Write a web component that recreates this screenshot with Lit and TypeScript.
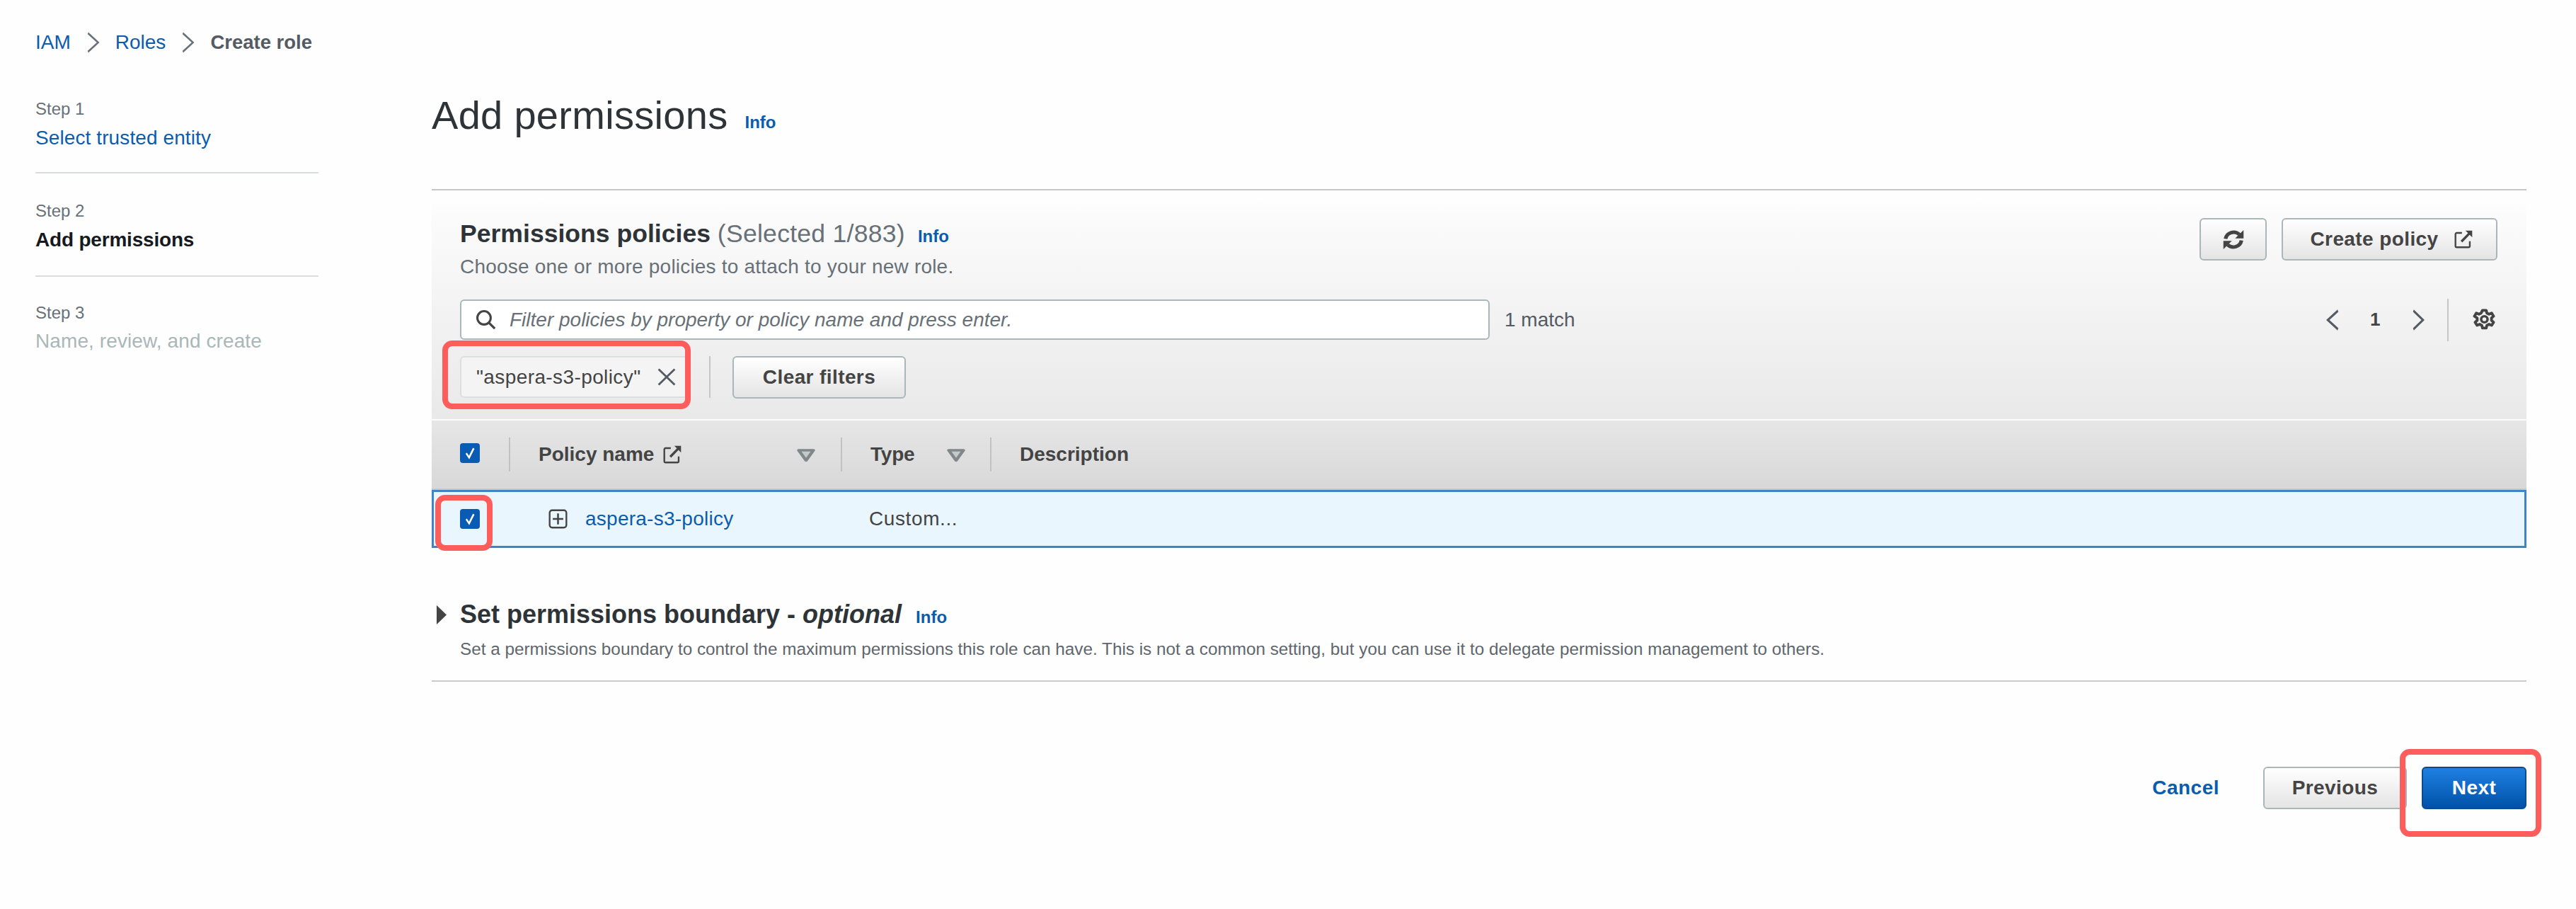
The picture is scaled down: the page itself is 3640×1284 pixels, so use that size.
import { LitElement, css, html, svg } from 'lit';
import { customElement } from 'lit/decorators.js';

const icon = (cls: string, body: unknown, box = '0 0 16 16') =>
  html`<svg class=${cls} viewBox=${box} fill="none" preserveAspectRatio="none">${body}</svg>`;

const external = (cls: string) =>
  icon(cls, svg`
    <path d="M7 2.4H2.6a1 1 0 0 0-1 1v10a1 1 0 0 0 1 1h10a1 1 0 0 0 1-1V9.4" stroke="currentColor" stroke-width="1.4"/>
    <path d="M6.6 9.6 14 2" stroke="currentColor" stroke-width="2"/>
    <path d="M15.6 .4v5.6L10 .4z" fill="currentColor"/>`);

const sortCaret = (cls: string) =>
  icon(cls, svg`<path d="M2 3h12L8 14z" fill="#c6c9ca" stroke="#80888b" stroke-width="2.6" stroke-linejoin="round"/>`);

const tick = () =>
  html`<span class="check">${icon('tick', svg`<path d="M3.4 8.2 7 13 12.8 2.6" stroke="#fff" stroke-width="2.2"/>`)}</span>`;

@customElement('app-root')
export class AppRoot extends LitElement {
  static styles = css`
    :host {
      display: block;
      position: relative;
      width: 3640px;
      height: 1284px;
      overflow: hidden;
      background: #fefefe;
      color: #444b53;
      font-family: 'Liberation Sans', Arial, sans-serif;
      font-size: 28px;
    }
    svg { display: block; flex: none; }
    a { color: #0b5cad; text-decoration: none; }

    .crumbs {
      display: flex;
      align-items: center;
      height: 120px;
      padding-left: 50px;
    }
    .crumbs .here { color: #545b64; font-weight: 700; font-size: 27.5px; }
    .crumb-sep { width: 19px; height: 30px; margin: 0 22px; color: #687078; }

    .layout { display: flex; }
    .side { width: 400px; margin-left: 50px; }
    .main { width: 2960px; margin-left: 160px; }

    .step { padding-top: 37px; height: 107px; border-top: 2px solid #d9dcdd; }
    .step:first-child { padding-top: 18px; height: 105px; border-top: none; }
    .step:last-child { padding-top: 35px; }
    .step-num { font-size: 24px; line-height: 32px; color: #687078; }
    .step-name { line-height: 40px; margin-top: 5px; letter-spacing: .1px; }
    .step-name.active { font-weight: 700; color: #16191f; letter-spacing: -.2px; }
    .step-name.off { color: #aab7b8; margin-top: 4px; }

    .title-row {
      display: flex;
      height: 147px;
      border-bottom: 2px solid #c4c7c8;
    }
    h1 {
      margin: 0;
      font-size: 56px;
      font-weight: 400;
      line-height: 86px;
      color: #2e3338;
      letter-spacing: .3px;
    }
    .info { font-size: 24px; font-weight: 700; color: #0b5cad; }
    h1 + .info { margin: 36px 0 0 24px; line-height: 34px; }

    .panel {
      box-sizing: border-box;
      height: 323px;
      padding: 39px 41px 0 40px;
      background: linear-gradient(#fff 0, #fbfbfb 40px, #e9e9e9 100%);
    }
    .panel-head { display: flex; justify-content: space-between; height: 115px; }
    h2 { margin: 0; font-size: 35.6px; line-height: 44px; font-weight: 700; color: #2e3338; }
    h2 .count { font-weight: 400; color: #687078; letter-spacing: .25px; }
    h2 .info { margin-left: 18px; }
    .sub { margin-top: 5px; line-height: 32px; color: #687078; letter-spacing: .2px; }
    .actions { display: flex; gap: 21px; }

    .btn {
      box-sizing: border-box;
      display: flex;
      align-items: center;
      justify-content: center;
      height: 60px;
      border: 2px solid #aab7b8;
      border-radius: 6px;
      background: linear-gradient(#fff, #e4e4e4);
      font-weight: 700;
      color: #444;
      letter-spacing: .4px;
    }
    .btn-refresh { width: 95px; }
    .ic-refresh { width: 30px; height: 29px; }
    .btn-create { width: 305px; gap: 21px; padding-left: 5px; }
    .ic-ext { width: 27px; height: 27px; color: #444; }
    .btn-clear { width: 245px; }

    .search-row { display: flex; align-items: center; height: 57px; }
    .search {
      box-sizing: border-box;
      display: flex;
      align-items: center;
      gap: 19px;
      width: 1455px;
      height: 57px;
      padding-left: 20px;
      background: #fff;
      border: 2px solid #aab7b8;
      border-radius: 6px;
      font-style: italic;
      color: #687078;
    }
    .ic-search { width: 29px; height: 29px; color: #444; }
    .match { margin-left: 21px; color: #545b64; }
    .pager { display: flex; align-items: center; margin-left: auto; margin-right: 2px; height: 60px; }
    .ic-chev { width: 19px; height: 30px; color: #545b64; }
    .ic-chev.next { width: 18px; }
    .page-no { width: 12px; margin: 0 47px 0 43px; font-weight: 700; font-size: 26px; color: #444; }
    .pager-sep { width: 2px; height: 60px; margin: 0 34px 0 32px; background: #c4c7c8; }
    .ic-gear { width: 33px; height: 32px; color: #444; }

    .filter-row { display: flex; align-items: center; height: 59px; margin-top: 23px; }
    .chip {
      box-sizing: border-box;
      display: flex;
      align-items: center;
      width: 318px;
      height: 59px;
      padding-left: 21px;
      background: #f4f4f4;
      border: 2px solid #dcdfe0;
      border-right: none;
      border-radius: 6px 0 0 6px;
      color: #444;
      letter-spacing: .4px;
    }
    .ic-x { width: 28px; height: 27px; margin-left: 22px; color: #545b64; }
    .filter-sep { width: 2px; height: 59px; margin: 0 31px 0 34px; background: #c4c7c8; }

    .thead {
      display: flex;
      align-items: center;
      box-sizing: border-box;
      height: 100px;
      border-top: 2px solid #fdfdfd;
      border-bottom: 2px solid #c6c9ca;
      background: linear-gradient(#e6e6e6, #d8d8d8);
      font-weight: 700;
      color: #444;
    }
    .cell { display: flex; align-items: center; height: 48px; box-sizing: border-box; }
    .thead .cell + .cell { border-left: 2px solid #bfc3c4; }
    .thead .check { margin-bottom: 4px; }
    .c-check { width: 109px; padding-left: 40px; }
    .c-name { width: 469px; padding-left: 40px; }
    .c-type { width: 211px; padding-left: 40px; letter-spacing: -.2px; }
    .c-desc { padding-left: 40px; }
    .ic-ext.small { margin-left: 12px; }
    .ic-caret { width: 28px; height: 21px; margin-left: auto; }
    .c-name .ic-caret { margin-right: 35px; }
    .c-type .ic-caret { margin-right: 34px; }

    .check {
      display: flex;
      align-items: center;
      justify-content: center;
      width: 28px;
      height: 28px;
      border-radius: 4px;
      background: #0a5bb4;
    }
    .tick { width: 18px; height: 20px; }

    .tbody-row {
      display: flex;
      align-items: center;
      box-sizing: border-box;
      height: 82px;
      border: 3px solid #3f84c8;
      background: #eaf6fe;
    }
    .tbody-row .c-check { width: 106px; padding-left: 37px; }
    .tbody-row .c-name { padding-left: 56px; gap: 25px; letter-spacing: .25px; }
    .tbody-row .c-type { padding-left: 40px; color: #444; letter-spacing: .6px; }
    .ic-plus { width: 27px; height: 28px; color: #444; }

    .boundary {
      height: 119px;
      padding-top: 68px;
      border-bottom: 2px solid #c9cccd;
    }
    .boundary h2 { display: flex; align-items: center; font-size: 36px; white-space: pre; }
    .boundary h2 .info { margin: 8px 0 0 20px; }
    .ic-tri { width: 16px; height: 27px; margin: 0 18px 0 6px; color: #444; }
    .boundary p { margin: 7px 0 0 40px; font-size: 24.3px; line-height: 32px; color: #5f666d; }

    .footer { display: flex; align-items: center; justify-content: flex-end; margin-top: 120px; }
    .cancel { font-weight: 700; margin-right: 62px; letter-spacing: .5px; }
    .btn-prev { width: 203px; }
    .btn-next {
      width: 148px;
      margin-left: 21px;
      background: linear-gradient(#1f80e2, #0052a8);
      border-color: #0b4a8c;
      color: #fff;
    }

    .mark {
      position: absolute;
      box-sizing: border-box;
      border: 8px solid #ff5c5c;
      border-radius: 14px;
    }
    .mark-chip { left: 625px; top: 481px; width: 351px; height: 97px; }
    .mark-check { left: 615px; top: 699px; width: 81px; height: 79px; }
    .mark-next { left: 3391px; top: 1058px; width: 200px; height: 124px; }
  `;

  render() {
    return html`
      <nav class="crumbs">
        <a href="#">IAM</a>
        ${icon('crumb-sep', svg`<path d="M2 1l12 7-12 7" stroke="currentColor" stroke-width="1.6"/>`)}
        <a href="#">Roles</a>
        ${icon('crumb-sep', svg`<path d="M2 1l12 7-12 7" stroke="currentColor" stroke-width="1.6"/>`)}
        <span class="here">Create role</span>
      </nav>
      <div class="layout">
        <aside class="side">
          <div class="step">
            <div class="step-num">Step 1</div>
            <div class="step-name"><a href="#">Select trusted entity</a></div>
          </div>
          <div class="step">
            <div class="step-num">Step 2</div>
            <div class="step-name active">Add permissions</div>
          </div>
          <div class="step">
            <div class="step-num">Step 3</div>
            <div class="step-name off">Name, review, and create</div>
          </div>
        </aside>
        <main class="main">
          <div class="title-row">
            <h1>Add permissions</h1>
            <a class="info" href="#">Info</a>
          </div>
          <section class="panel">
            <div class="panel-head">
              <div>
                <h2>Permissions policies <span class="count">(Selected 1/883)</span><a class="info" href="#">Info</a></h2>
                <div class="sub">Choose one or more policies to attach to your new role.</div>
              </div>
              <div class="actions">
                <div class="btn btn-refresh">
                  ${icon('ic-refresh', svg`
                    <path d="M2 7.4A6.2 6.2 0 0 1 12.4 4M14 8.6A6.2 6.2 0 0 1 3.6 12" stroke="#444" stroke-width="2.8"/>
                    <path d="M15.6 .6v6.4H9.2zM.4 15.4V9h6.4z" fill="#444"/>`)}
                </div>
                <div class="btn btn-create">Create policy ${external('ic-ext')}</div>
              </div>
            </div>
            <div class="search-row">
              <div class="search">
                ${icon('ic-search', svg`
                  <circle cx="6.6" cy="6.6" r="5.2" stroke="currentColor" stroke-width="1.7"/>
                  <path d="M10.4 10.4 15 15" stroke="currentColor" stroke-width="1.8"/>`)}
                <span>Filter policies by property or policy name and press enter.</span>
              </div>
              <span class="match">1 match</span>
              <div class="pager">
                ${icon('ic-chev', svg`<path d="M14 1 2 8l12 7" stroke="currentColor" stroke-width="2"/>`)}
                <span class="page-no">1</span>
                ${icon('ic-chev next', svg`<path d="M2 1l12 7-12 7" stroke="currentColor" stroke-width="2"/>`)}
                <span class="pager-sep"></span>
                ${icon('ic-gear', svg`
                  <path d="M6.7 1.2h2.6l.4 1.9 1.5.8 1.8-.8 1.3 2.2-1.4 1.3v1.7l1.4 1.3-1.3 2.2-1.8-.8-1.5.8-.4 1.9H6.7l-.4-1.9-1.5-.8-1.8.8-1.3-2.2 1.4-1.3V6.6L1.2 5.3l1.3-2.2 1.8.8 1.5-.8z" stroke="currentColor" stroke-width="1.9" stroke-linejoin="round"/>
                  <circle cx="8" cy="7.5" r="2.2" stroke="currentColor" stroke-width="1.7"/>`)}
              </div>
            </div>
            <div class="filter-row">
              <div class="chip">
                <span>"aspera-s3-policy"</span>
                ${icon('ic-x', svg`<path d="M1.5 1.5l13 13M14.5 1.5l-13 13" stroke="currentColor" stroke-width="1.6"/>`)}
              </div>
              <span class="filter-sep"></span>
              <div class="btn btn-clear">Clear filters</div>
            </div>
          </section>
          <div class="thead">
            <div class="cell c-check">${tick()}</div>
            <div class="cell c-name">Policy name ${external('ic-ext small')} ${sortCaret('ic-caret')}</div>
            <div class="cell c-type">Type ${sortCaret('ic-caret')}</div>
            <div class="cell c-desc">Description</div>
          </div>
          <div class="tbody-row">
            <div class="cell c-check">${tick()}</div>
            <div class="cell c-name">
              ${icon('ic-plus', svg`
                <rect x="1" y="1" width="14" height="14" rx="2" stroke="currentColor" stroke-width="1.4"/>
                <path d="M8 3.6v8.8M3.6 8h8.8" stroke="currentColor" stroke-width="1.5"/>`)}
              <a href="#">aspera-s3-policy</a>
            </div>
            <div class="cell c-type">Custom...</div>
          </div>
          <section class="boundary">
            <h2>${icon('ic-tri', svg`<path d="M1 0l14 8-14 8z" fill="currentColor"/>`)}<span>Set permissions boundary - <em>optional</em></span><a class="info" href="#">Info</a></h2>
            <p>Set a permissions boundary to control the maximum permissions this role can have. This is not a common setting, but you can use it to delegate permission management to others.</p>
          </section>
          <div class="footer">
            <a class="cancel" href="#">Cancel</a>
            <div class="btn btn-prev">Previous</div>
            <div class="btn btn-next">Next</div>
          </div>
        </main>
      </div>
      <div class="mark mark-chip"></div>
      <div class="mark mark-check"></div>
      <div class="mark mark-next"></div>
    `;
  }
}
